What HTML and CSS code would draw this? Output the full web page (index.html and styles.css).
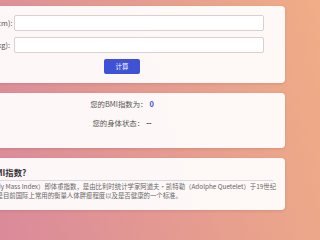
FILE: index.html
```html
<!DOCTYPE html>
<html lang="zh-CN">
<head>
<meta charset="utf-8">
<title>BMI计算器</title>
<link rel="stylesheet" href="styles.css">
</head>
<body>
<div class="page">
  <section class="card form-card">
    <div class="row">
      <label class="label" for="h">身高(cm):</label>
      <input class="field" id="h" type="text">
    </div>
    <div class="row">
      <label class="label" for="w">体重(kg):</label>
      <input class="field" id="w" type="text">
    </div>
    <button class="btn" type="button">计算</button>
  </section>
  <section class="card result-card">
    <p class="result">您的BMI指数为：<span class="value">0</span></p>
    <p class="result">您的身体状态：<span class="value dark">--</span></p>
  </section>
  <section class="card info-card">
    <h2 class="title">什么是BMI指数?</h2>
    <p class="desc">BMI（Body Mass Index）即体重指数，是由比利时统计学家阿道夫·凯特勒（Adolphe Quetelet）于19世纪<br>提出的，是目前国际上常用的衡量人体胖瘦程度以及是否健康的一个标准。</p>
  </section>
</div>
</body>
</html>
```
FILE: styles.css
```css
html {
  overflow: hidden;
  background: linear-gradient(75deg, #da8a9a 0%, #f0ad86 100%);
  min-height: 100%;
}
body {
  margin: 0;
  font-family: "Noto Sans CJK SC", "Noto Sans", sans-serif;
  color: #555;
}
.page {
  width: 326px;
  margin-left: -41px;
  padding: 6px 0 10px;
  display: flex;
  flex-direction: column;
  gap: 10px;
}
.card {
  background: rgba(255, 255, 255, 0.93);
  box-shadow: 0 1px 3px rgba(120, 60, 60, 0.18);
  border-radius: 4px;
  padding: 0 12px;
}
.form-card {
  padding-top: 9px;
  padding-bottom: 9px;
  display: flex;
  flex-direction: column;
  align-items: center;
  gap: 6px;
}
.row {
  width: 284px;
  display: flex;
  align-items: center;
}
.label {
  width: 32px;
  flex: none;
  margin-right: 2px;
  font-size: 7.4px;
  line-height: 10px;
  color: #555;
  white-space: nowrap;
}
.field {
  flex: 1;
  min-width: 0;
  height: 16px;
  box-sizing: border-box;
  margin: 0;
  padding: 0 3px;
  border: 1px solid #d8d1ce;
  border-radius: 2px;
  background: #fff;
  outline: none;
}
.btn {
  margin: 0;
  height: 15px;
  padding: 0 11.5px;
  border: none;
  border-radius: 2px;
  background: #3f52d6;
  color: #fff;
  font-family: inherit;
  font-size: 6.4px;
  line-height: 15px;
}
.result-card {
  padding-top: 6px;
  padding-bottom: 20px;
  display: flex;
  flex-direction: column;
  gap: 9px;
  text-align: center;
}
.result {
  margin: 0;
  font-size: 7.4px;
  line-height: 10px;
  color: #555;
}
.value {
  font-weight: bold;
  color: #3f51c8;
  margin-left: 2px;
}
.value.dark {
  color: #2c3468;
}
.info-card {
  padding: 9px 12px 10px 6px;
}
.title {
  margin: 0;
  padding-bottom: 3px;
  border-bottom: 1px solid #d9d9e6;
  font-size: 8.3px;
  line-height: 10px;
  font-weight: bold;
  color: #333;
}
.desc {
  margin: 1px 0 0;
  padding-left: 6px;
  font-size: 6.4px;
  line-height: 9px;
  color: #666;
  white-space: nowrap;
}
```
